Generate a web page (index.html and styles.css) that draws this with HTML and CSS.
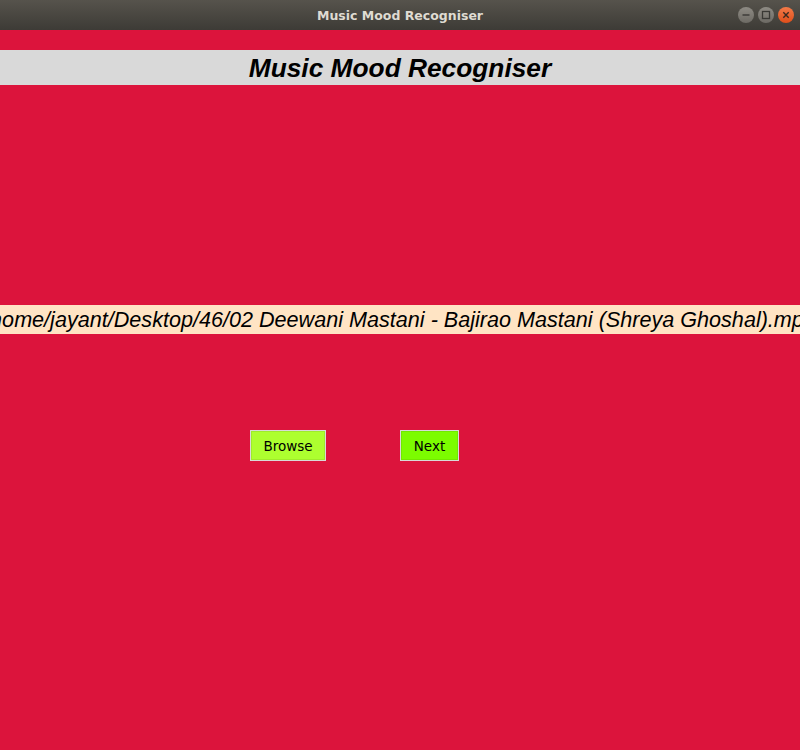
FILE: index.html
```html
<!DOCTYPE html>
<html>
<head>
<meta charset="utf-8">
<link rel="stylesheet" href="styles.css">
</head>
<body>
<div class="titlebar">
  <span class="wintitle">Music Mood Recogniser</span>
  <div class="controls">
    <span class="ctl"><svg width="16" height="16" viewBox="0 0 16 16"><line x1="4.5" y1="8" x2="11.5" y2="8" stroke="#3a3935" stroke-width="1.4"/></svg></span>
    <span class="ctl"><svg width="16" height="16" viewBox="0 0 16 16"><rect x="4.5" y="4.5" width="7" height="7" fill="none" stroke="#3a3935" stroke-width="1.3"/></svg></span>
    <span class="ctl close"><svg width="16" height="16" viewBox="0 0 16 16"><path d="M5.3 5.3 L10.7 10.7 M10.7 5.3 L5.3 10.7" stroke="#3a2a20" stroke-width="1.4"/></svg></span>
  </div>
</div>
<main class="app">
  <h1 class="heading">Music Mood Recogniser</h1>
  <div class="filepath"><span>/home/jayant/Desktop/46/02 Deewani Mastani - Bajirao Mastani (Shreya Ghoshal).mp3</span></div>
  <div class="buttons">
    <button class="btn browse">Browse</button>
    <button class="btn next">Next</button>
  </div>
</main>
</body>
</html>
```
FILE: styles.css
```css
html, body {
  margin: 0;
  padding: 0;
  height: 100%;
  background: #dc143c;
}
body {
  width: 800px;
  height: 750px;
  overflow: hidden;
  display: flex;
  flex-direction: column;
}
.titlebar {
  height: 30px;
  flex: none;
  background: linear-gradient(#56534c, #3d3b36);
  position: relative;
  display: flex;
  align-items: center;
  justify-content: center;
}
.wintitle {
  font-family: "DejaVu Sans", sans-serif;
  font-weight: bold;
  font-size: 12.5px;
  color: #dfdbd2;
}
.controls {
  position: absolute;
  right: 6px;
  top: 7px;
  display: flex;
  gap: 4px;
}
.ctl {
  width: 16px;
  height: 16px;
  border-radius: 50%;
  background: linear-gradient(#8e8b84, #6d6a64);
  display: flex;
  align-items: center;
  justify-content: center;
}
.ctl.close {
  background: linear-gradient(#f37a48, #df4e1a);
}
.app {
  flex: 1;
  background: #dc143c;
  display: flex;
  flex-direction: column;
}
.heading {
  margin: 20px 0 0 0;
  height: 35px;
  background: #d9d9d9;
  font-family: "Liberation Sans", Arial, sans-serif;
  font-style: italic;
  font-weight: bold;
  font-size: 26.3px;
  line-height: 36px;
  text-align: center;
  color: #000;
}
.filepath {
  margin-top: 220px;
  height: 29px;
  background: #ffe4c4;
  display: flex;
  justify-content: center;
  overflow: hidden;
  white-space: nowrap;
  font-family: "Liberation Sans", Arial, sans-serif;
  font-style: italic;
  font-size: 21.6px;
  line-height: 30px;
  color: #000;
}
.filepath span {
  flex: none;
}
.buttons {
  margin-top: 96px;
  padding-left: 250px;
  display: flex;
  gap: 74px;
}
.btn {
  height: 31px;
  margin: 0;
  padding: 0;
  border: 1px solid #d9d9d9;
  box-shadow: inset 0 0 0 1px rgba(0,0,0,0.08);
  font-family: "DejaVu Sans", sans-serif;
  font-size: 13.5px;
  color: #000;
}
.browse {
  width: 76px;
  background: #adff2f;
}
.next {
  width: 59px;
  background: #7cfc00;
}
```
